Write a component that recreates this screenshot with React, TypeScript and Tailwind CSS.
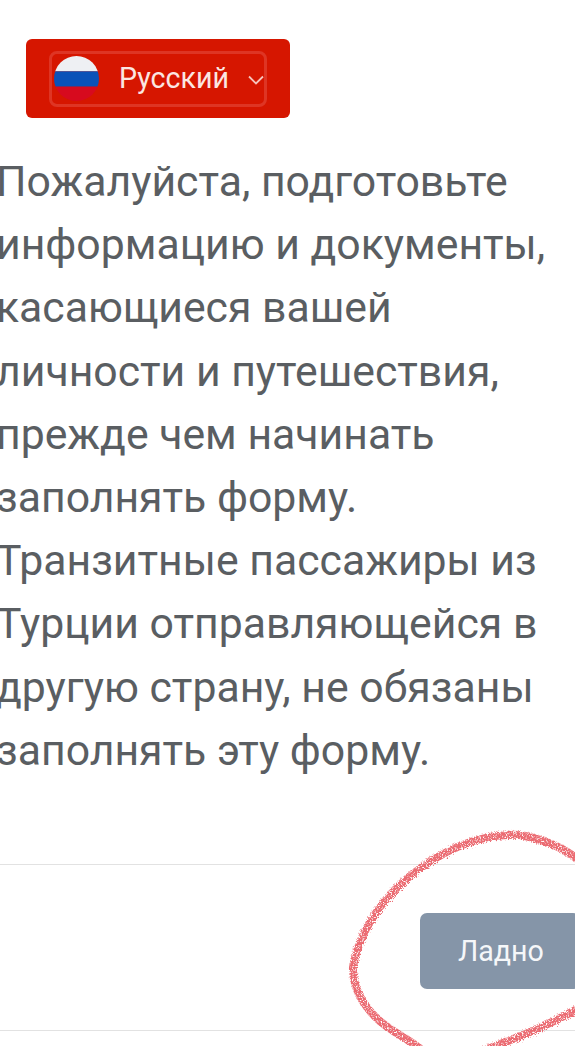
import React from 'react';

const lines = [
  'Пожалуйста, подготовьте',
  'информацию и документы,',
  'касающиеся вашей',
  'личности и путешествия,',
  'прежде чем начинать',
  'заполнять форму.',
  'Транзитные пассажиры из',
  'Турции отправляющейся в',
  'другую страну, не обязаны',
  'заполнять эту форму.',
];

function RussianFlag() {
  return (
    <svg viewBox="0 0 44 44" className="w-[45px] h-[45px] shrink-0">
      <clipPath id="flag-circle">
        <circle cx="22" cy="22" r="22" />
      </clipPath>
      <g clipPath="url(#flag-circle)">
        <rect width="44" height="15" fill="#eef0f3" />
        <rect y="15" width="44" height="15" fill="#0b52b8" />
        <rect y="30" width="44" height="14" fill="#d70a1e" />
      </g>
    </svg>
  );
}

function Scribble() {
  return (
    <svg viewBox="0 0 575 1046" className="absolute left-0 top-0 w-[575px] h-[1046px] pointer-events-none">
      <filter id="chalk" x="-10%" y="-10%" width="120%" height="120%">
        <feTurbulence type="fractalNoise" baseFrequency="0.8" numOctaves="2" seed="4" result="noise" />
        <feDisplacementMap in="SourceGraphic" in2="noise" scale="6" result="rough" />
        <feColorMatrix
          in="noise"
          type="matrix"
          values="0 0 0 0 0  0 0 0 0 0  0 0 0 0 0  0 0 0 -4 3"
          result="grain"
        />
        <feComposite in="rough" in2="grain" operator="in" />
        <feGaussianBlur stdDeviation="0.5" />
      </filter>
      <g fill="none" stroke="#e8525a" strokeWidth="8" strokeOpacity="0.85" filter="url(#chalk)">
        <path d="M600 885 C585 860 560 842 520 835 C480 832 440 852 410 876 C380 900 358 935 353 967 C352 995 372 1018 395 1032 C408 1040 420 1048 430 1056" />
        <path d="M480 1052 C510 1040 545 1028 590 1002" />
      </g>
    </svg>
  );
}

export default function App() {
  return (
    <div className="relative w-[575px] h-[1046px] overflow-hidden bg-white font-['Roboto',sans-serif]">
      <div className="pt-[39px] pl-[26px]">
        <div className="w-[264px] h-[79px] rounded-[6px] bg-[#d61600] flex items-center pl-[23px]">
          <div className="w-[218px] h-[56px] rounded-[8px] border-[3px] border-[#de3524] flex items-center pl-[2px] gap-[20px]">
            <RussianFlag />
            <span className="text-[28.6px] text-[#fbe6e2] leading-none">Русский</span>
            <svg viewBox="0 0 16 10" className="w-[16px] h-[10px] -ml-[1px] mt-[3px]" fill="none" stroke="#f5c4bc" strokeWidth="1.8">
              <path d="M1 1.5 L8 8.5 L15 1.5" />
            </svg>
          </div>
        </div>
      </div>

      <div className="mt-[32px] -ml-[4px] text-[42.75px] leading-[63.2px] text-[#5a5e62] whitespace-nowrap">
        {lines.map((line) => (
          <div key={line}>{line}</div>
        ))}
      </div>

      <div className="mt-[82px] h-[167px] border-y border-[#e2e2e2] flex justify-end pt-[48px]">
        <button className="w-[160px] h-[76px] -mr-[5px] rounded-[7px] bg-[#8595a8] text-[28.6px] text-[#f5f7f9] text-left pl-[38px]">
          Ладно
        </button>
      </div>

      <Scribble />
    </div>
  );
}
